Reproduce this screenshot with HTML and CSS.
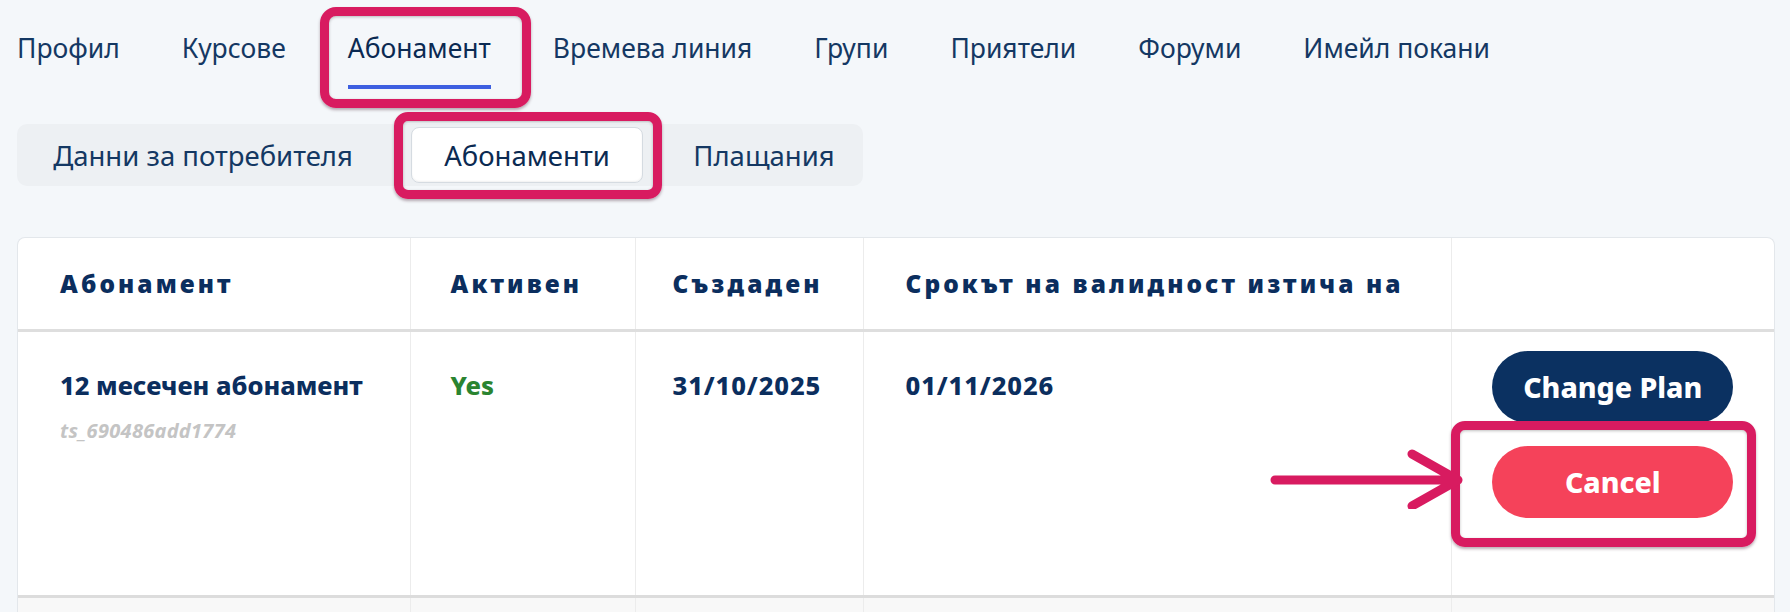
FILE: index.html
```html
<!DOCTYPE html>
<html lang="bg">
<head>
<meta charset="utf-8">
<title>Абонамент</title>
<link rel="stylesheet" href="styles.css">
</head>
<body>
<div class="page">
  <nav class="tabs">
    <a class="tab">Профил</a>
    <a class="tab">Курсове</a>
    <a class="tab active">Абонамент<span class="mark mark-tab"></span></a>
    <a class="tab">Времева линия</a>
    <a class="tab">Групи</a>
    <a class="tab">Приятели</a>
    <a class="tab">Форуми</a>
    <a class="tab">Имейл покани</a>
  </nav>

  <div class="subtabs">
    <a class="subtab s1">Данни за потребителя</a>
    <a class="subtab s2 active">Абонаменти<span class="mark mark-sub"></span></a>
    <a class="subtab s3">Плащания</a>
  </div>

  <div class="card">
    <table class="grid">
      <colgroup>
        <col class="c1"><col class="c2"><col class="c3"><col class="c4"><col class="c5">
      </colgroup>
      <thead>
        <tr>
          <th>Абонамент</th>
          <th class="p2">Активен</th>
          <th class="p3">Създаден</th>
          <th>Срокът на валидност изтича на</th>
          <th></th>
        </tr>
      </thead>
      <tbody>
        <tr class="row">
          <td>
            <div class="plan">12 месечен абонамент</div>
            <div class="plan-id">ts_690486add1774</div>
          </td>
          <td class="p2"><span class="yes">Yes</span></td>
          <td class="p3"><span class="val">31/10/2025</span></td>
          <td><span class="val">01/11/2026</span></td>
          <td class="actions">
            <button class="btn btn-navy">Change Plan</button>
            <div class="cancel-wrap">
              <span class="mark mark-cancel"></span>
              <svg class="arrow" width="200" height="60" viewBox="0 0 200 60">
                <path d="M5 31 H186 M142 5 L188 31 L142 57" fill="none" stroke="#d81b60" stroke-width="9" stroke-linecap="round" stroke-linejoin="round"/>
              </svg>
              <button class="btn btn-red">Cancel</button>
            </div>
          </td>
        </tr>
        <tr class="row next">
          <td></td><td class="p2"></td><td class="p3"></td><td></td><td></td>
        </tr>
      </tbody>
    </table>
  </div>
</div>
</body>
</html>
```
FILE: styles.css
```css
html, body {
  margin: 0;
  padding: 0;
  background: #f4f7fa;
  height: 612px;
  overflow: hidden;
}
body {
  font-family: "Noto Sans", "Open Sans", sans-serif;
  color: #0f2d57;
}
.page {
  padding: 0 15px 0 17px;
}
.tabs {
  display: flex;
  gap: 62px;
  padding: 28px 0 0 0;
  height: 100px;
  box-sizing: border-box;
}
.tab {
  position: relative;
  font-size: 26.5px;
  line-height: 40px;
  color: #143863;
  height: 64px;
  white-space: nowrap;
}
.tab.active {
  color: #0b2a52;
}
.tab.active::after {
  content: "";
  position: absolute;
  left: 0;
  right: 0;
  top: 57px;
  height: 4px;
  background: #3d5fe0;
}
.mark {
  position: absolute;
  border: 9px solid #d81b60;
  border-radius: 16px;
  box-shadow: 0 2px 3px rgba(60, 20, 40, .35), inset 0 1px 3px rgba(0, 0, 0, .25);
  pointer-events: none;
  z-index: 3;
}
.mark-tab {
  left: -28px;
  right: -40px;
  top: -21px;
  bottom: -16px;
}
.subtabs {
  display: inline-flex;
  gap: 22px;
  margin-top: 24px;
  padding: 3px 0;
  background: #edf0f3;
  border-radius: 10px;
  height: 62px;
  box-sizing: border-box;
}
.subtab {
  position: relative;
  display: flex;
  align-items: center;
  justify-content: center;
  box-sizing: border-box;
  font-size: 27.5px;
  color: #143863;
  border-radius: 8px;
  white-space: nowrap;
}
.s1 { width: 372px; }
.s2 { width: 232px; }
.s3 { width: 198px; }
.subtab.active {
  background: #fff;
  border: 1px solid #d5dbe1;
  box-shadow: inset 0 -1px 2px rgba(0,0,0,.06);
  color: #0b2a52;
}
.mark-sub {
  left: -18px;
  right: -20px;
  top: -16px;
  bottom: -17px;
  border-radius: 14px;
}
.card {
  margin-top: 51px;
  background: #fff;
  border: 1px solid #e3e7eb;
  border-bottom: 0;
  border-radius: 8px 8px 0 0;
  overflow: hidden;
}
.grid {
  width: 100%;
  border-collapse: collapse;
  table-layout: fixed;
}
.c1 { width: 392px; }
.c2 { width: 225px; }
.c3 { width: 228px; }
.c4 { width: 588px; }
.c5 { width: auto; }
th, td {
  border-left: 1px solid #ececec;
  text-align: left;
  vertical-align: top;
}
th:first-child, td:first-child {
  border-left: 0;
}
th {
  height: 91px;
  padding: 0 0 0 42px;
  vertical-align: middle;
  font-size: 24.5px;
  font-weight: 900;
  letter-spacing: 3.1px;
  color: #0b2e5e;
  border-bottom: 3px solid #dedede;
  white-space: nowrap;
}
td {
  padding: 36px 0 0 42px;
  height: 227px;
}
th.p2, td.p2 { padding-left: 40px; }
th.p3, td.p3 { padding-left: 37px; }
.row td {
  border-bottom: 3px solid #dcdcdc;
}
.plan, .val, .yes {
  font-size: 25.5px;
  font-weight: 800;
  color: #0b2e5e;
  line-height: 34px;
  white-space: nowrap;
}
.val {
  letter-spacing: 0.9px;
}
.plan-id {
  margin-top: 15px;
  font-size: 20px;
  font-weight: 700;
  font-style: italic;
  letter-spacing: 0.3px;
  color: #c4c4c4;
}
.yes {
  font-size: 25.5px;
  color: #2a8430;
}
td.actions {
  padding: 19px 0 0 0;
}
.actions {
  text-align: center;
}
.btn {
  display: block;
  width: 241px;
  height: 72px;
  margin: 0 auto;
  border: 0;
  border-radius: 36px;
  font-family: "Noto Sans", sans-serif;
  font-size: 28.5px;
  font-weight: 800;
  color: #fff;
  padding: 0;
}
.btn-navy {
  background: #0b3161;
}
.btn-red {
  background: #f5425a;
}
.cancel-wrap {
  position: relative;
  width: 241px;
  margin: 23px auto 0;
}
.mark-cancel {
  left: -41px;
  right: -23px;
  top: -25px;
  bottom: -29px;
  border-radius: 14px;
}
.arrow {
  position: absolute;
  left: -222px;
  top: 3px;
  z-index: 4;
}
.row.next td {
  background: #f8f8f8;
  height: 40px;
  border-bottom: 0;
}
```
